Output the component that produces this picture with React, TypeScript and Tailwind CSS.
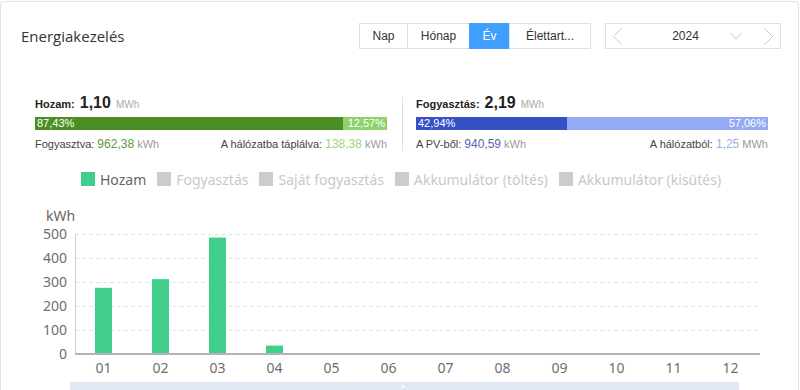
import React from 'react';

const tabs = [
  { label: 'Nap', w: 'w-[49px]' },
  { label: 'Hónap', w: 'w-[63px]' },
  { label: 'Év', w: 'w-[41px]', active: true },
  { label: 'Élettart...', w: 'w-[82px]' },
];

const legend = [
  { label: 'Hozam', on: true },
  { label: 'Fogyasztás' },
  { label: 'Saját fogyasztás' },
  { label: 'Akkumulátor (töltés)' },
  { label: 'Akkumulátor (kisütés)' },
];

const months = ['01', '02', '03', '04', '05', '06', '07', '08', '09', '10', '11', '12'];
const values = [276, 312, 485, 35, 0, 0, 0, 0, 0, 0, 0, 0];

// chart geometry (svg coords, svg sits at page x=1, y=195)
const X0 = 74;
const X1 = 758;
const Y0 = 159;
const STEP = 24;
const CAT = (X1 - X0) / 12;

function Chart() {
  return (
    <svg width={798} height={210} className="block" style={{ fontFamily: '"Noto Sans", "Open Sans", sans-serif' }}>
      <text x={59.5} y={26} fontSize={14} fill="#666" textAnchor="middle">
        kWh
      </text>
      {[0, 1, 2, 3, 4, 5].map((i) => {
        const y = Y0 - i * STEP;
        return (
          <g key={i}>
            {i > 0 && <line x1={X0} x2={X1} y1={y + 0.5} y2={y + 0.5} stroke="#e2e2e2" strokeDasharray="4 3" />}
            <text x={66} y={y + 5} fontSize={14} fill="#6e6e6e" textAnchor="end">
              {i * 100}
            </text>
          </g>
        );
      })}
      <line x1={X0 + 0.5} x2={X0 + 0.5} y1={Y0 - 5 * STEP} y2={Y0} stroke="#d0d0d0" />
      {values.map((v, i) => {
        const h = (v / 100) * STEP;
        const cx = X0 + CAT * (i + 0.5);
        return (
          <g key={i}>
            {v > 0 && <rect x={cx - 8.5} y={Y0 - h} width={17} height={h} fill="#41cf8b" />}
            <text x={cx} y={Y0 + 19} fontSize={14} fill="#6e6e6e" textAnchor="middle">
              {months[i]}
            </text>
          </g>
        );
      })}
      <line x1={X0} x2={X1 + 1} y1={Y0} y2={Y0} stroke="#b4b4b4" strokeWidth={2} />
      <rect x={69} y={187} width={669} height={12} fill="#e0e7f5" />
      <rect x={400} y={190} width={4} height={3} fill="#f4f6fb" />
    </svg>
  );
}

function StatBar({
  title,
  value,
  unit,
  left,
  right,
  leftColor,
  rightColor,
  leftPct,
  a,
  b,
}: {
  title: string;
  value: string;
  unit: string;
  left: string;
  right: string;
  leftColor: string;
  rightColor: string;
  leftPct: string;
  a: React.ReactNode;
  b: React.ReactNode;
}) {
  return (
    <div className="w-[352px]">
      <div className="flex items-baseline h-[20px] text-[#222]">
        <span className="text-[11px] font-bold">{title}</span>
        <span className="ml-[5px] text-[16px] font-bold leading-[20px]">{value}</span>
        <span className="ml-[5px] text-[10px] text-[#aaa]">{unit}</span>
      </div>
      <div className="mt-[4px] flex h-[13px] text-[11px] leading-[13px] text-white">
        <div className={`${leftColor} pl-[2px]`} style={{ width: leftPct }}>
          {left}
        </div>
        <div className={`${rightColor} flex-1 text-right pr-[2px]`}>{right}</div>
      </div>
      <div className="mt-[7px] flex justify-between text-[11px] leading-[14px] text-[#444]">
        <span>{a}</span>
        <span>{b}</span>
      </div>
    </div>
  );
}

function Chevron({ d, w, h }: { d: string; w: number; h: number }) {
  return (
    <svg width={w} height={h} viewBox={`0 0 ${w} ${h}`} className="block">
      <polyline points={d} fill="none" stroke="#c4c7cd" strokeWidth={1} />
    </svg>
  );
}

export default function App() {
  return (
    <div className="w-[800px] h-[390px] overflow-hidden bg-white" style={{ fontFamily: '"Liberation Sans", Arial, sans-serif' }}>
      <div className="mt-px w-[799px] h-[420px] border border-[#e3e3e3] rounded-[4px] bg-white">
        <div className="flex items-center pl-5 pr-[17px] pt-[21px]">
          <div className="flex-1 text-[15px] text-[#333]" style={{ fontFamily: '"Open Sans", "Noto Sans", sans-serif' }}>
            Energiakezelés
          </div>
          <div className="flex h-[26px] text-[12px]">
            {tabs.map((t, i) => (
              <div
                key={t.label}
                className={`${t.w} flex items-center justify-center border ${
                  t.active ? 'bg-[#409eff] border-[#409eff] text-white' : 'border-[#dcdfe6] text-[#333]'
                } ${i > 0 ? '-ml-px' : ''}`}
              >
                {t.label}
              </div>
            ))}
          </div>
          <div className="ml-[14px] w-[176px] h-[26px] border border-[#dcdfe6] flex items-center text-[12px] text-[#333]">
            <div className="ml-[7px]">
              <Chevron d="8.5,0.5 0.5,8.5 8.5,16.5" w={9} h={17} />
            </div>
            <div className="flex-1 text-center pl-[19px]">2024</div>
            <div className="mr-[22px]">
              <Chevron d="0.5,0.5 6,7 11.5,0.5" w={12} h={8} />
            </div>
            <div className="mr-[7px]">
              <Chevron d="0.5,0.5 8.5,8.5 0.5,16.5" w={9} h={17} />
            </div>
          </div>
        </div>

        <div className="mt-[44px] flex pl-[34px]">
          <StatBar
            title="Hozam:"
            value="1,10"
            unit="MWh"
            left="87,43%"
            right="12,57%"
            leftColor="bg-[#4b8f22]"
            rightColor="bg-[#8fd26c]"
            leftPct="87.5%"
            a={
              <>
                Fogyasztva: <span className="text-[#5b9a3b] text-[12px]">962,38</span>{' '}
                <span className="text-[#999]">kWh</span>
              </>
            }
            b={
              <>
                A hálózatba táplálva: <span className="text-[#9bd67c] text-[12px]">138,38</span>{' '}
                <span className="text-[#999]">kWh</span>
              </>
            }
          />
          <div className="ml-[15px] mr-[13px] mt-[4px] h-[54px] w-px bg-[#dedede]" />
          <StatBar
            title="Fogyasztás:"
            value="2,19"
            unit="MWh"
            left="42,94%"
            right="57,06%"
            leftColor="bg-[#3651c5]"
            rightColor="bg-[#94aaf6]"
            leftPct="43%"
            a={
              <>
                A PV-ből: <span className="text-[#5566b4] text-[12px]">940,59</span>{' '}
                <span className="text-[#999]">kWh</span>
              </>
            }
            b={
              <>
                A hálózatból: <span className="text-[#9aaef0] text-[12px]">1,25</span>{' '}
                <span className="text-[#999]">MWh</span>
              </>
            }
          />
        </div>

        <div
          className="mt-[20px] flex h-[16px] items-center pl-[80px] text-[14px]"
          style={{ fontFamily: '"Noto Sans", "Open Sans", sans-serif' }}
        >
          {legend.map((l) => (
            <div key={l.label} className="mr-[11px] flex items-center">
              <div className={`h-[14px] w-[14px] ${l.on ? 'bg-[#41cf8b]' : 'bg-[#cccccc]'}`} />
              <span className={`ml-[5px] ${l.on ? 'text-[#666]' : 'text-[#c8c8c8]'}`}>{l.label}</span>
            </div>
          ))}
        </div>

        <div className="mt-[8px]">
          <Chart />
        </div>
      </div>
    </div>
  );
}
